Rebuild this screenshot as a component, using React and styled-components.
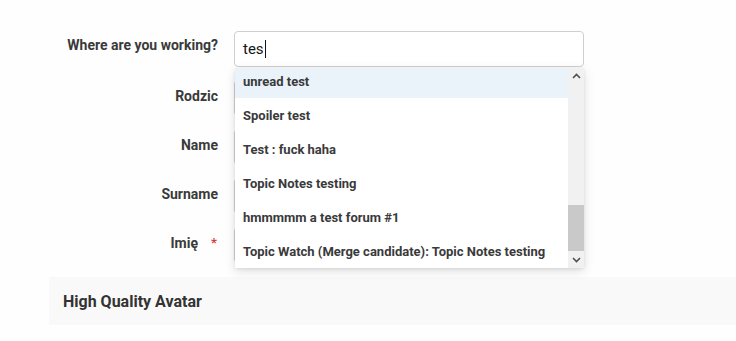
import React from "react";
import styled, { createGlobalStyle } from "styled-components";

const Global = createGlobalStyle`
  html, body { margin: 0; padding: 0; background: #fefefe; }
  body { font-family: Roboto, "Liberation Sans", Arial, sans-serif; color: #333; }
  * { box-sizing: border-box; }
`;

const Page = styled.div`
  width: 736px;
  height: 341px;
  overflow: hidden;
  padding-top: 31px;
  background: #fefefe;
`;

const Form = styled.div`
  display: flex;
  flex-direction: column;
  gap: 13px;
`;

const Row = styled.div`
  display: grid;
  grid-template-columns: 218px 350px;
  column-gap: 16px;
  align-items: start;
  position: relative;
`;

const Label = styled.label`
  display: flex;
  justify-content: flex-end;
  align-items: flex-start;
  font-size: 14px;
  font-weight: 700;
  color: #3a3a3a;
  line-height: 18px;
  padding-top: ${(p) => p.$top}px;
`;

const Star = styled.span`
  color: #d43f3a;
  font-size: 13px;
  margin-left: 13px;
  margin-top: 0px;
  width: 7px;
`;

const Field = styled.div`
  position: relative;
  width: 350px;
`;

const Input = styled.div`
  height: 36px;
  border: 1px solid #cfcfcf;
  border-radius: 4px;
  background: #fff;
  padding: 0 8px;
  display: flex;
  align-items: center;
  font-size: 15px;
  color: #141414;
`;

const Caret = styled.span`
  display: inline-block;
  width: 1px;
  height: 18px;
  background: #111;
  margin-left: 1px;
`;

const Dropdown = styled.div`
  position: absolute;
  left: 1px;
  top: 37px;
  width: 349px;
  height: 200px;
  background: #fff;
  box-shadow: 0 3px 10px rgba(0, 0, 0, 0.13), 0 1px 3px rgba(0, 0, 0, 0.08);
  z-index: 10;
  display: flex;
  overflow: hidden;
`;

const List = styled.div`
  flex: 1;
  display: flex;
  flex-direction: column;
  margin-top: -4px;
`;

const Item = styled.div`
  height: 34px;
  flex: 0 0 34px;
  display: flex;
  align-items: center;
  padding: 0 8px;
  font-size: 13px;
  font-weight: 700;
  color: #3a3a3a;
  background: ${(p) => (p.$active ? "#eaf3fa" : "#fff")};
  white-space: nowrap;
`;

const Scrollbar = styled.div`
  width: 16px;
  background: #f1f1f1;
  display: flex;
  flex-direction: column;
  align-items: center;
`;

const Arrow = styled.div`
  height: 16px;
  width: 16px;
  display: flex;
  align-items: center;
  justify-content: center;
`;

const Track = styled.div`
  flex: 1;
  width: 100%;
  display: flex;
  flex-direction: column;
  justify-content: flex-end;
  padding-bottom: 1px;
`;

const Thumb = styled.div`
  height: 46px;
  width: 100%;
  background: #c9c9c9;
`;

const Section = styled.div`
  margin-top: 14px;
  margin-left: 49px;
  height: 48px;
  background: #f9f9f9;
  display: flex;
  align-items: center;
  padding-left: 14px;
  font-size: 16px;
  font-weight: 700;
  color: #333;
`;

const Chevron = ({ up }) => (
  <svg width="9" height="6" viewBox="0 0 9 6">
    <path
      d={up ? "M1 5 L4.5 1.5 L8 5" : "M1 1 L4.5 4.5 L8 1"}
      fill="none"
      stroke="#505050"
      strokeWidth="1.6"
    />
  </svg>
);

const items = [
  "unread test",
  "Spoiler test",
  "Test : fuck haha",
  "Topic Notes testing",
  "hmmmmm a test forum #1",
  "Topic Watch (Merge candidate): Topic Notes testing",
];

export default function App() {
  return (
    <>
      <Global />
      <Page>
        <Form>
          <Row>
            <Label $top={5}>Where are you working?</Label>
            <Field>
              <Input>
                tes
                <Caret />
              </Input>
              <Dropdown>
                <List>
                  {items.map((t, i) => (
                    <Item key={t} $active={i === 0}>
                      {t}
                    </Item>
                  ))}
                </List>
                <Scrollbar>
                  <Arrow>
                    <Chevron up />
                  </Arrow>
                  <Track>
                    <Thumb />
                  </Track>
                  <Arrow>
                    <Chevron />
                  </Arrow>
                </Scrollbar>
              </Dropdown>
            </Field>
          </Row>
          <Row>
            <Label $top={7}>Rodzic</Label>
            <Field>
              <Input />
            </Field>
          </Row>
          <Row>
            <Label $top={7}>Name</Label>
            <Field>
              <Input />
            </Field>
          </Row>
          <Row>
            <Label $top={7}>Surname</Label>
            <Field>
              <Input />
            </Field>
          </Row>
          <Row>
            <Label $top={7}>
              Imię<Star>*</Star>
            </Label>
            <Field>
              <Input />
            </Field>
          </Row>
        </Form>
        <Section>High Quality Avatar</Section>
      </Page>
    </>
  );
}
